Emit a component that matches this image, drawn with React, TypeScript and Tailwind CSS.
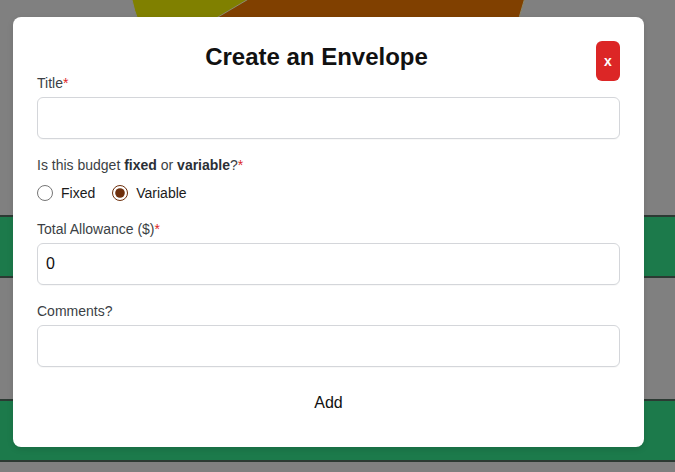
import React, { useState } from 'react';

const Label: React.FC<{ children: React.ReactNode; required?: boolean; className?: string }> = ({ children, required, className }) => (
  <label className={`block text-sm leading-5 text-[#3b3f45] ${className ?? 'mb-1'}`}>
    {children}
    {required && <span className="text-[#dc2626]">*</span>}
  </label>
);

const App: React.FC = () => {
  const [form, setForm] = useState({ title: '', type: 'variable', allowance: '0', comments: '' });

  const inputCls =
    'block w-full h-[42px] rounded-md border border-[#d4d6da] bg-white px-2 text-base text-[#111] outline-none shadow-[0_1px_1px_rgba(0,0,0,0.03)]';

  return (
    <div className="relative h-[472px] w-[675px] overflow-hidden bg-[#808080] font-['Liberation_Sans',Arial,sans-serif]">
      {/* background page (dimmed) */}
      <svg width="675" height="215" viewBox="0 0 675 215" className="block">
        <circle cx="328" cy="-48" r="202" fill="#808000" stroke="#808080" strokeWidth="1" />
        <path d="M328,-48 L530,-48 A202,202 0 0,1 154.1,54.8 Z" fill="#804000" stroke="#8a8a70" strokeWidth="1" />
      </svg>
      <div className="h-[63px] border-y-2 border-[#2c3a33] bg-[#1c7a4b]" />
      <div className="h-[121px]" />
      <div className="h-[63px] border-y-2 border-[#2c3a33] bg-[#1c7a4b]" />

      {/* modal */}
      <div className="absolute left-[13px] top-[17px] w-[631px] rounded-lg bg-white p-6 shadow-[0_2px_6px_rgba(0,0,0,0.12)]">
        <div className="flex h-8 items-start">
          <h2 className="flex-1 text-center text-2xl font-bold leading-8 text-[#111]">Create an Envelope</h2>
          <button className="flex h-10 w-6 shrink-0 items-center justify-center rounded-md bg-[#dc2626] text-sm font-bold text-white">
            x
          </button>
        </div>

        <Label required>Title</Label>
        <input
          className={inputCls}
          value={form.title}
          onChange={(e) => setForm({ ...form, title: e.target.value })}
        />

        <Label required className="mt-4 mb-2">
          Is this budget <b className="font-bold text-[#2b2f36]">fixed</b> or{' '}
          <b className="font-bold text-[#2b2f36]">variable</b>?
        </Label>
        <div className="flex h-5 items-center text-sm text-[#1a1a1a]">
          <input
            type="radio"
            name="type"
            className="h-4 w-4 accent-[#6e2f0c]"
            checked={form.type === 'fixed'}
            onChange={() => setForm({ ...form, type: 'fixed' })}
          />
          <span className="ml-2">Fixed</span>
          <input
            type="radio"
            name="type"
            className="ml-[17px] h-4 w-4 accent-[#6e2f0c]"
            checked={form.type === 'variable'}
            onChange={() => setForm({ ...form, type: 'variable' })}
          />
          <span className="ml-2">Variable</span>
        </div>

        <Label required className="mt-4 mb-1">Total Allowance ($)</Label>
        <input
          className={inputCls}
          value={form.allowance}
          onChange={(e) => setForm({ ...form, allowance: e.target.value })}
        />

        <Label className="mt-4 mb-1">Comments?</Label>
        <input
          className={inputCls}
          value={form.comments}
          onChange={(e) => setForm({ ...form, comments: e.target.value })}
        />

        <div className="mt-4 flex justify-center">
          <button className="py-2 text-base leading-6 text-[#111]">Add</button>
        </div>
      </div>
    </div>
  );
};

export default App;
